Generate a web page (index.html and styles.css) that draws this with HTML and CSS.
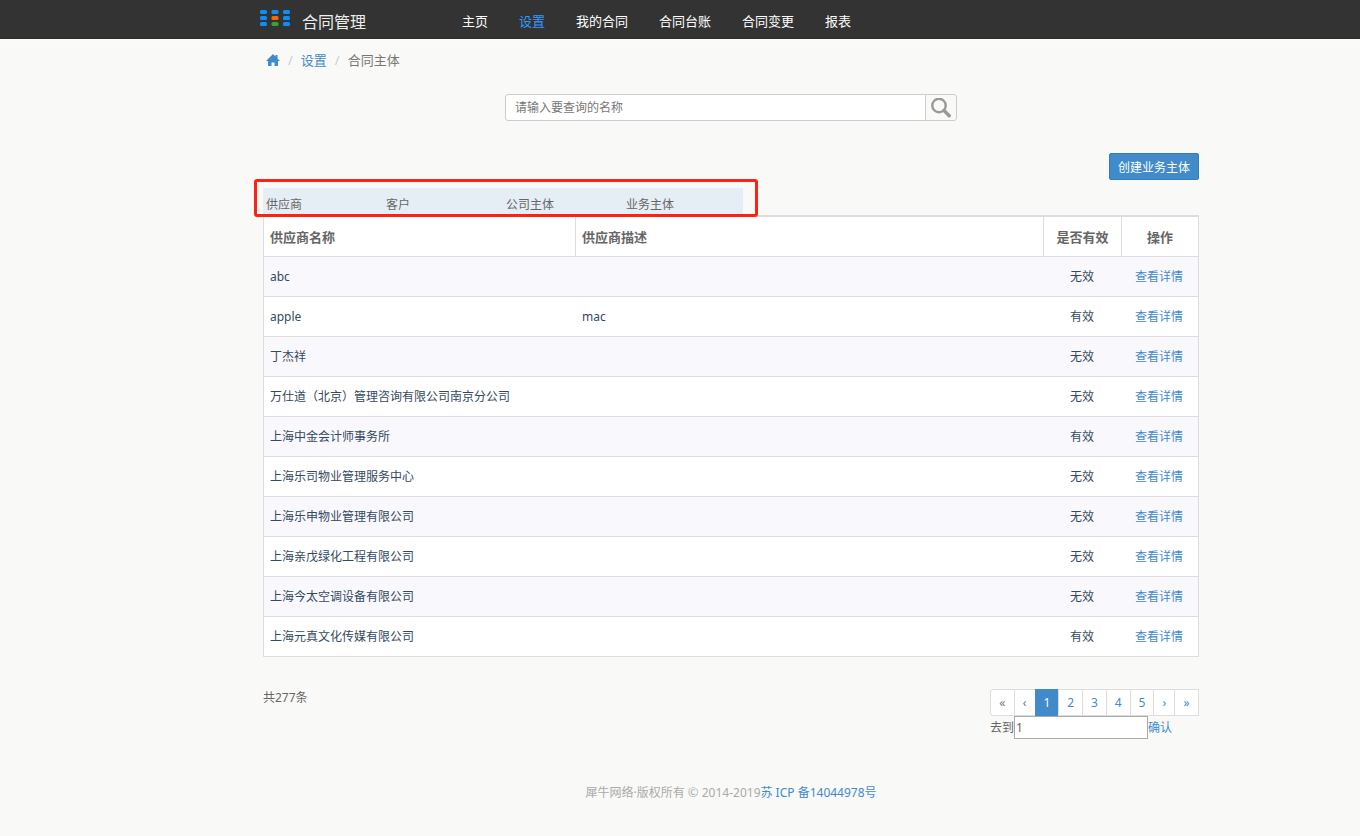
FILE: index.html
```html
<!DOCTYPE html>
<html lang="zh-CN">
<head>
  <meta charset="UTF-8">
  <title>合同管理</title>
  <link rel="stylesheet" href="styles.css">
</head>
<body>

<header class="navbar">
  <div class="container navbar-inner">
    <a class="brand" href="#">
      <svg class="brand-logo" width="30" height="18" viewBox="0 0 30 18">
        <g fill="#0a8fff">
          <rect x="0" y="1" width="7" height="4" rx="1.5"/>
          <rect x="11.5" y="1" width="7" height="4" rx="1.5"/>
          <rect x="23" y="1" width="7" height="4" rx="1.5"/>
          <rect x="0" y="7" width="7" height="4" rx="1.5"/>
          <rect x="23" y="7" width="7" height="4" rx="1.5"/>
          <rect x="0" y="13" width="7" height="4" rx="1.5"/>
          <rect x="23" y="13" width="7" height="4" rx="1.5"/>
        </g>
        <rect x="11.5" y="7" width="7" height="4" rx="1.5" fill="#f60"/>
        <rect x="11.5" y="13" width="7" height="4" rx="1.5" fill="#33a532"/>
      </svg>
      <span>合同管理</span>
    </a>
    <nav class="menu">
      <a href="#">主页</a>
      <a href="#" class="active">设置</a>
      <a href="#">我的合同</a>
      <a href="#">合同台账</a>
      <a href="#">合同变更</a>
      <a href="#">报表</a>
    </nav>
  </div>
</header>

<main class="container">
  <div class="breadcrumb">
    <a href="#" aria-label="主页">
      <svg width="14" height="12" viewBox="0 0 14 12"><path fill="#428bca" d="M7 0 L9.5 2.4 V1 H11.5 V4.4 L14 7 H12 V12 H8.5 V8.5 H5.5 V12 H2 V7 H0 Z"/></svg>
    </a>
    <span class="sep">/</span>
    <a href="#">设置</a>
    <span class="sep">/</span>
    <span>合同主体</span>
  </div>

  <form class="search">
    <input type="text" placeholder="请输入要查询的名称" aria-label="名称">
    <button type="button" aria-label="查询">
      <svg width="20" height="20" viewBox="0 0 20 20" fill="none" stroke="#999">
        <circle cx="8" cy="7.5" r="6.7" stroke-width="2.4"/>
        <path d="M13 12.5 L18.2 17.7" stroke-width="3.4" stroke-linecap="round"/>
      </svg>
    </button>
  </form>

  <div class="actions">
    <button type="button" class="btn-primary">创建业务主体</button>
  </div>

  <div class="tabs">
    <a href="#">供应商</a>
    <a href="#">客户</a>
    <a href="#">公司主体</a>
    <a href="#">业务主体</a>
    <div class="highlight"></div>
  </div>

  <table class="list">
    <thead>
      <tr>
        <th class="col-name">供应商名称</th>
        <th>供应商描述</th>
        <th class="col-valid">是否有效</th>
        <th class="col-action">操作</th>
      </tr>
    </thead>
    <tbody>
      <tr><td>abc</td><td></td><td>无效</td><td><a href="#">查看详情</a></td></tr>
      <tr><td>apple</td><td>mac</td><td>有效</td><td><a href="#">查看详情</a></td></tr>
      <tr><td>丁杰祥</td><td></td><td>无效</td><td><a href="#">查看详情</a></td></tr>
      <tr><td>万仕道（北京）管理咨询有限公司南京分公司</td><td></td><td>无效</td><td><a href="#">查看详情</a></td></tr>
      <tr><td>上海中金会计师事务所</td><td></td><td>有效</td><td><a href="#">查看详情</a></td></tr>
      <tr><td>上海乐司物业管理服务中心</td><td></td><td>无效</td><td><a href="#">查看详情</a></td></tr>
      <tr><td>上海乐申物业管理有限公司</td><td></td><td>无效</td><td><a href="#">查看详情</a></td></tr>
      <tr><td>上海亲戊绿化工程有限公司</td><td></td><td>无效</td><td><a href="#">查看详情</a></td></tr>
      <tr><td>上海今太空调设备有限公司</td><td></td><td>无效</td><td><a href="#">查看详情</a></td></tr>
      <tr><td>上海元真文化传媒有限公司</td><td></td><td>有效</td><td><a href="#">查看详情</a></td></tr>
    </tbody>
  </table>

  <div class="table-footer">
    <div class="total">共277条</div>
    <div class="pager">
      <div class="pagination">
        <a href="#" class="disabled">«</a>
        <a href="#" class="disabled">‹</a>
        <a href="#" class="current">1</a>
        <a href="#">2</a>
        <a href="#">3</a>
        <a href="#">4</a>
        <a href="#">5</a>
        <a href="#">›</a>
        <a href="#">»</a>
      </div>
      <div class="jump">
        <label for="page">去到</label>
        <input type="text" id="page" value="1">
        <a href="#">确认</a>
      </div>
    </div>
  </div>
</main>

<footer class="container">
  <p class="copyright">犀牛网络·版权所有 <span class="mark">©</span> 2014-2019<a href="#">苏 ICP 备14044978号</a></p>
</footer>

</body>
</html>
```
FILE: styles.css
```css
* {
  box-sizing: border-box;
}

body {
  margin: 0;
  background: #f9f9f7;
  color: #666;
  font-family: "Noto Sans", "Noto Sans CJK SC", sans-serif;
  font-size: 12px;
  line-height: 18px;
}

a {
  color: #428bca;
  text-decoration: none;
}

input,
button {
  font-family: inherit;
  font-size: 12px;
}

.container {
  max-width: 1038px;
  margin: 0 auto;
  padding-left: 102px;
}

.navbar {
  background: #333;
  border-bottom: 1px solid #2b2b2b;
  box-shadow: 0 1px 2px #fff;
}

/* the navbar sits on the same left edge as the page content */
.navbar-inner {
  height: 38px;
  display: flex;
  align-items: center;
}

.brand {
  width: 202px;
  display: flex;
  gap: 12px;
  margin-left: -3px;
  padding-top: 5px;
  color: #eee;
  font-size: 16px;
  line-height: 24px;
}

.brand-logo {
  margin-top: -1px;
}

.menu {
  display: flex;
  gap: 31px;
  padding-top: 4px;
  font-size: 13px;
}

.menu a {
  color: #fff;
}

.menu a.active {
  color: #3399ff;
}

.breadcrumb {
  display: flex;
  gap: 8px;
  padding: 12px 3px 0;
  font-size: 13px;
  color: #777;
}

.breadcrumb svg {
  display: block;
  margin-top: 3px;
}

.breadcrumb .sep {
  color: #ccc;
}

.search {
  display: flex;
  max-width: 452px;
  height: 27px;
  margin: 25px auto 0;
}

.search input {
  flex: 1;
  min-width: 0;
  border: 1px solid #ccc;
  border-radius: 3px 0 0 3px;
  padding: 0 9px;
  background: #fff;
}

.search input::placeholder {
  color: #777;
}

.search button {
  width: 32px;
  margin-left: -1px;
  padding: 2px 5px;
  border: 1px solid #ccc;
  border-radius: 0 3px 3px 0;
  background: #f9f9f7;
}

.search svg {
  display: block;
}

.actions {
  display: flex;
  justify-content: flex-end;
  margin-top: 32px;
}

.btn-primary {
  width: 90px;
  height: 27px;
  padding: 0;
  border: 1px solid #357ebd;
  border-radius: 2px;
  background: #428bca;
  color: #fff;
}

.tabs {
  position: relative;
  display: flex;
  max-width: 480px;
  height: 27px;
  margin-top: 8px;
  background: #e6eef5;
}

.tabs a {
  flex: 1;
  padding: 8px 3px 0;
  color: #666;
}

/* red frame over the tabs */
.highlight {
  position: absolute;
  top: -9px;
  right: -15px;
  bottom: -2px;
  left: -9px;
  border: 3px solid #ff2113;
  border-radius: 3px;
  pointer-events: none;
}

.list {
  width: 100%;
  border: 1px solid #ddd;
  border-top-width: 2px;
  border-bottom: none;
  border-spacing: 0;
  table-layout: fixed;
  background: #fff;
}

.list th,
.list td {
  height: 40px;
  padding: 0 6px;
  border-bottom: 1px solid #ddd;
  text-align: left;
}

.list th {
  border-right: 1px solid #ddd;
  font-size: 13px;
}

.list th:last-child {
  border-right: none;
}

.list td {
  color: #34495e;
}

.list tbody tr:nth-child(odd) {
  background: #f9f8fd;
}

.list th:nth-child(n+3),
.list td:nth-child(n+3) {
  text-align: center;
}

.list td:nth-child(n+3) {
  padding-right: 8px;
}

.col-name {
  width: 312px;
}

.col-valid {
  width: 78px;
}

.col-action {
  width: 76px;
}

.table-footer {
  display: flex;
  justify-content: space-between;
  margin-top: 32px;
}

.pager {
  width: 209px;
}

.pagination {
  display: flex;
}

.pagination a {
  flex: 1 1 25px;
  height: 27px;
  margin-left: -1px;
  border: 1px solid #ddd;
  background: #fff;
  line-height: 26px;
  text-align: center;
}

.pagination a:first-child {
  margin-left: 0;
  border-radius: 3px 0 0 3px;
}

.pagination a:nth-child(2),
.pagination a:nth-child(8) {
  flex-basis: 22px;
}

.pagination .disabled {
  color: #777;
}

.pagination .current {
  border-color: #428bca;
  background: #428bca;
  color: #fff;
}

.jump {
  display: flex;
  line-height: 23px;
}

.jump input {
  width: 134px;
  height: 23px;
  padding: 0 1px;
  border: 1px solid #aaa;
  color: #666;
}

.copyright {
  margin: 44px 0 0;
  color: #aaa;
  text-align: center;
}

.copyright .mark {
  font-family: "Noto Sans CJK SC", sans-serif;
  font-size: 13px;
}
```
